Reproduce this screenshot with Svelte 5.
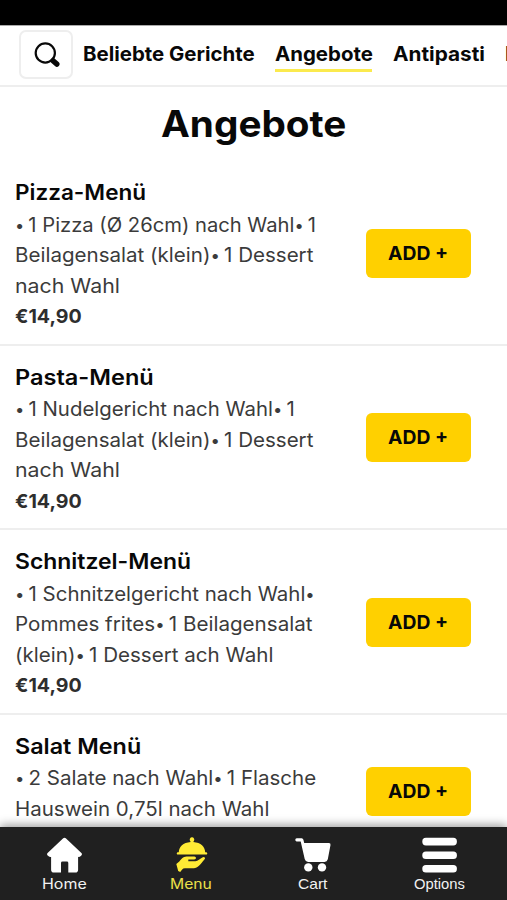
<script>
  const tabs = [
    { label: 'Beliebte Gerichte', width: 171.5 },
    { label: 'Angebote', width: 98, active: true },
    { label: 'Antipasti', width: 92.5 },
    { label: 'Pizza', width: 54 }
  ];

  const dishes = [
    {
      name: ['Pizza-Menü', 131],
      lines: [['• 1 Pizza (Ø 26cm) nach Wahl• 1', 300.5], ['Beilagensalat (klein)• 1 Dessert', 298.5], ['nach Wahl', 105]],
      price: '€14,90'
    },
    {
      name: ['Pasta-Menü', 139],
      lines: [['• 1 Nudelgericht nach Wahl• 1', 279.5], ['Beilagensalat (klein)• 1 Dessert', 298.5], ['nach Wahl', 105]],
      price: '€14,90'
    },
    {
      name: ['Schnitzel-Menü', 176],
      lines: [['• 1 Schnitzelgericht nach Wahl•', 298], ['Pommes frites• 1 Beilagensalat', 298], ['(klein)• 1 Dessert ach Wahl', 258]],
      price: '€14,90'
    },
    {
      name: ['Salat Menü', 126],
      lines: [['• 2 Salate nach Wahl• 1 Flasche', 301], ['Hauswein 0,75l nach Wahl', 254]],
      price: '€19,90'
    }
  ];

  // Stretches a single line of text so that it spans the given width.
  function fit(node, width) {
    const apply = () => {
      const natural = node.offsetWidth;
      node.style.transform = `scaleX(${width / natural})`;
      node.style.marginRight = `${width - natural}px`;
    };
    apply();
    document.fonts.ready.then(apply);
  }
</script>

<div class="screen">
  <div class="status"></div>

  <header>
    <button class="search" aria-label="Suche">
      <svg width="27" height="27" viewBox="0 0 27 27">
        <circle cx="12.3" cy="12" r="9.6" fill="none" stroke="#080808" stroke-width="2.2" />
        <path d="M18.7 18.8 L20.5 20.6" stroke="#080808" stroke-width="2.5" />
        <path d="M20 19.7 L23.8 23.1" stroke="#080808" stroke-width="5.4" stroke-linecap="round" />
      </svg>
    </button>
    <nav>
      {#each tabs as tab}
        <span class="tab" class:active={tab.active}><span class="line" use:fit={tab.width}>{tab.label}</span></span>
      {/each}
    </nav>
  </header>

  <main>
    <h1><span class="line" use:fit={185}>Angebote</span></h1>
    {#each dishes as dish}
      <article>
        <div class="text">
          <h2><span class="line" use:fit={dish.name[1]}>{dish.name[0]}</span></h2>
          {#each dish.lines as [text, width]}
            <div class="desc">
              <span class="line" use:fit={width}>{#each text.split(/(•)/) as part}{#if part === '•'}<span class="dot">•</span>{:else}{part}{/if}{/each}</span>
            </div>
          {/each}
          <div class="price"><span class="line" use:fit={67}>{dish.price}</span></div>
        </div>
        <button class="add"><span class="line" use:fit={60}>ADD +</span></button>
      </article>
    {/each}
  </main>

  <footer>
    <div class="item home">
      <svg width="36" height="36" viewBox="0 0 36 36" fill="#fff">
        <path d="M16.2 1.2 Q17.5 .2 18.8 1.2 L34.4 16 Q35.5 17.2 34.3 18.4 L33.2 19.6 Q32.3 20.4 31.1 19.8 V32.7 Q31.1 35.5 28.3 35.5 H21.3 V26 Q21.3 24.6 19.9 24.6 H15.5 Q14 24.6 14 26 V35.5 H6.9 Q4.1 35.5 4.1 32.7 V19.8 Q2.9 20.4 2 19.6 L.7 18.4 Q-.5 17.2 .6 16 Z" />
      </svg>
      <span class="line" use:fit={44.5}>Home</span>
    </div>
    <div class="item menu">
      <svg width="36" height="36" viewBox="0 0 36 36" fill="#ffeb35">
        <path d="M17 3.8 A2.3 2.3 0 1 1 21 3.8 L20.3 5 C28 5.6 32 10 32.2 15.2 H33.6 Q35 16.3 33.8 17.6 H4.2 Q3 16.3 4.4 15.2 H5.8 C6 10 10 5.6 17.7 5 Z" />
        <path d="M3.3 27 L6.3 24.6 C9 20.8 11 19.5 15 19.5 H21.4 Q23 19.6 23 21 Q23 22.3 21.2 22.4 H15.3 V24.2 H22.4 Q24.3 24 25.9 22.8 L29.3 20.4 Q30.8 19.6 31.8 20.4 Q32.5 21.2 31.4 22.4 C27.3 27.6 24.7 31 20.8 31.2 H12 Q10 31.2 9.2 32.4 L7.2 34.9 L5.2 34 Z" />
      </svg>
      <span class="line" use:fit={41.5}>Menu</span>
    </div>
    <div class="item cart">
      <svg width="36" height="36" viewBox="0 0 36 36" fill="#fff">
        <path d="M1.7 1.2 H6.7 Q8 1.3 8.4 2.7 L9.2 6.1 H33.9 Q35.8 6.3 35.5 8.1 L32.8 22.2 Q32.1 24.8 29.5 24.9 H13.1 Q10.4 24.8 9.7 22 L5.7 4.5 H1.7 Q.3 4.4 .3 2.8 Q.3 1.3 1.7 1.2 Z" />
        <circle cx="13.3" cy="30.4" r="4.2" />
        <circle cx="27" cy="30.4" r="4.2" />
      </svg>
      <span class="line" use:fit={29}>Cart</span>
    </div>
    <div class="item options">
      <svg width="36" height="36" viewBox="0 0 36 36" fill="#fff">
        <rect x=".3" y=".8" width="34.6" height="7.6" rx="3.6" />
        <rect x=".3" y="14.5" width="34.6" height="7.6" rx="3.6" />
        <rect x=".3" y="28" width="34.6" height="7.6" rx="3.6" />
      </svg>
      <span class="line" use:fit={51}>Options</span>
    </div>
  </footer>
</div>

<style>
  :global(body) {
    margin: 0;
    background: #fff;
  }
  .screen {
    width: 507px;
    height: 900px;
    overflow: hidden;
    display: flex;
    flex-direction: column;
    background: #fff;
    color: #080808;
    font-family: Inter, 'Open Sans', sans-serif;
  }
  .line {
    display: inline-block;
    white-space: nowrap;
    transform-origin: 0 50%;
  }
  button {
    padding: 0;
    font: inherit;
    color: inherit;
  }
  .status {
    flex: none;
    height: 25px;
    background: #000;
  }
  header {
    flex: none;
    box-sizing: border-box;
    height: 61.5px;
    padding: 5px 0 0 19px;
    border-top: 1px solid #aaa;
    border-bottom: 2px solid #eee;
    display: flex;
    align-items: flex-start;
    overflow: hidden;
  }
  .search {
    flex: none;
    box-sizing: border-box;
    width: 54px;
    height: 49px;
    margin-top: -1px;
    border: 2px solid #eee;
    border-radius: 7px;
    background: #fff;
    display: flex;
    align-items: center;
    justify-content: center;
  }
  nav {
    flex: none;
    display: flex;
    gap: 20.4px;
    margin: 8px 0 0 9.5px;
    font-size: 20px;
    font-weight: 700;
    line-height: 30px;
  }
  .tab {
    display: flex;
    height: 30px;
    border-bottom: 3px solid transparent;
  }
  .active {
    border-color: #fbea4e;
  }
  main {
    flex: 1;
    min-height: 0;
    overflow: hidden;
  }
  h1 {
    margin: 0;
    padding-left: 1px;
    height: 74.5px;
    line-height: 73px;
    font-size: 37px;
    font-weight: 700;
    text-align: center;
  }
  article {
    display: flex;
    align-items: center;
    justify-content: space-between;
    padding: 15px 36px 13px 15px;
    border-bottom: 2px solid #eee;
  }
  h2 {
    margin: 0;
    height: 32.5px;
    line-height: 32px;
    font-size: 21.5px;
    font-weight: 600;
  }
  .desc,
  .price {
    height: 30.5px;
    line-height: 32px;
    font-size: 19.7px;
    color: #3b3b3b;
  }
  .dot {
    font-size: 16px;
    line-height: 1;
    letter-spacing: -1.5px;
    vertical-align: 1.5px;
  }
  .price {
    font-weight: 700;
    font-size: 19.3px;
    line-height: 32px;
    color: #2e2e2e;
  }
  .add {
    width: 105px;
    height: 49px;
    border: 0;
    border-radius: 6px;
    background: #ffd000;
    font-size: 19px;
    font-weight: 700;
    line-height: 25px;
  }
  footer {
    position: relative;
    flex: none;
    box-sizing: border-box;
    height: 73.5px;
    padding-top: 10.5px;
    background: #202020;
    box-shadow: 0 -2px 9px rgba(0, 0, 0, 0.4);
    display: flex;
    color: #f2f2f2;
    font-size: 14px;
    line-height: 17px;
  }
  .item {
    display: flex;
    flex-direction: column;
    align-items: center;
    gap: 2px;
  }
  .home {
    width: 129px;
  }
  .menu {
    width: 124px;
    color: #ece04a;
  }
  .cart {
    width: 119px;
  }
  .options {
    width: 135px;
  }
  .cart,
  .options {
    font-family: 'Liberation Sans', Arial, sans-serif;
    font-size: 14.5px;
  }
  .cart .line,
  .options .line {
    line-height: 19px;
  }
</style>
